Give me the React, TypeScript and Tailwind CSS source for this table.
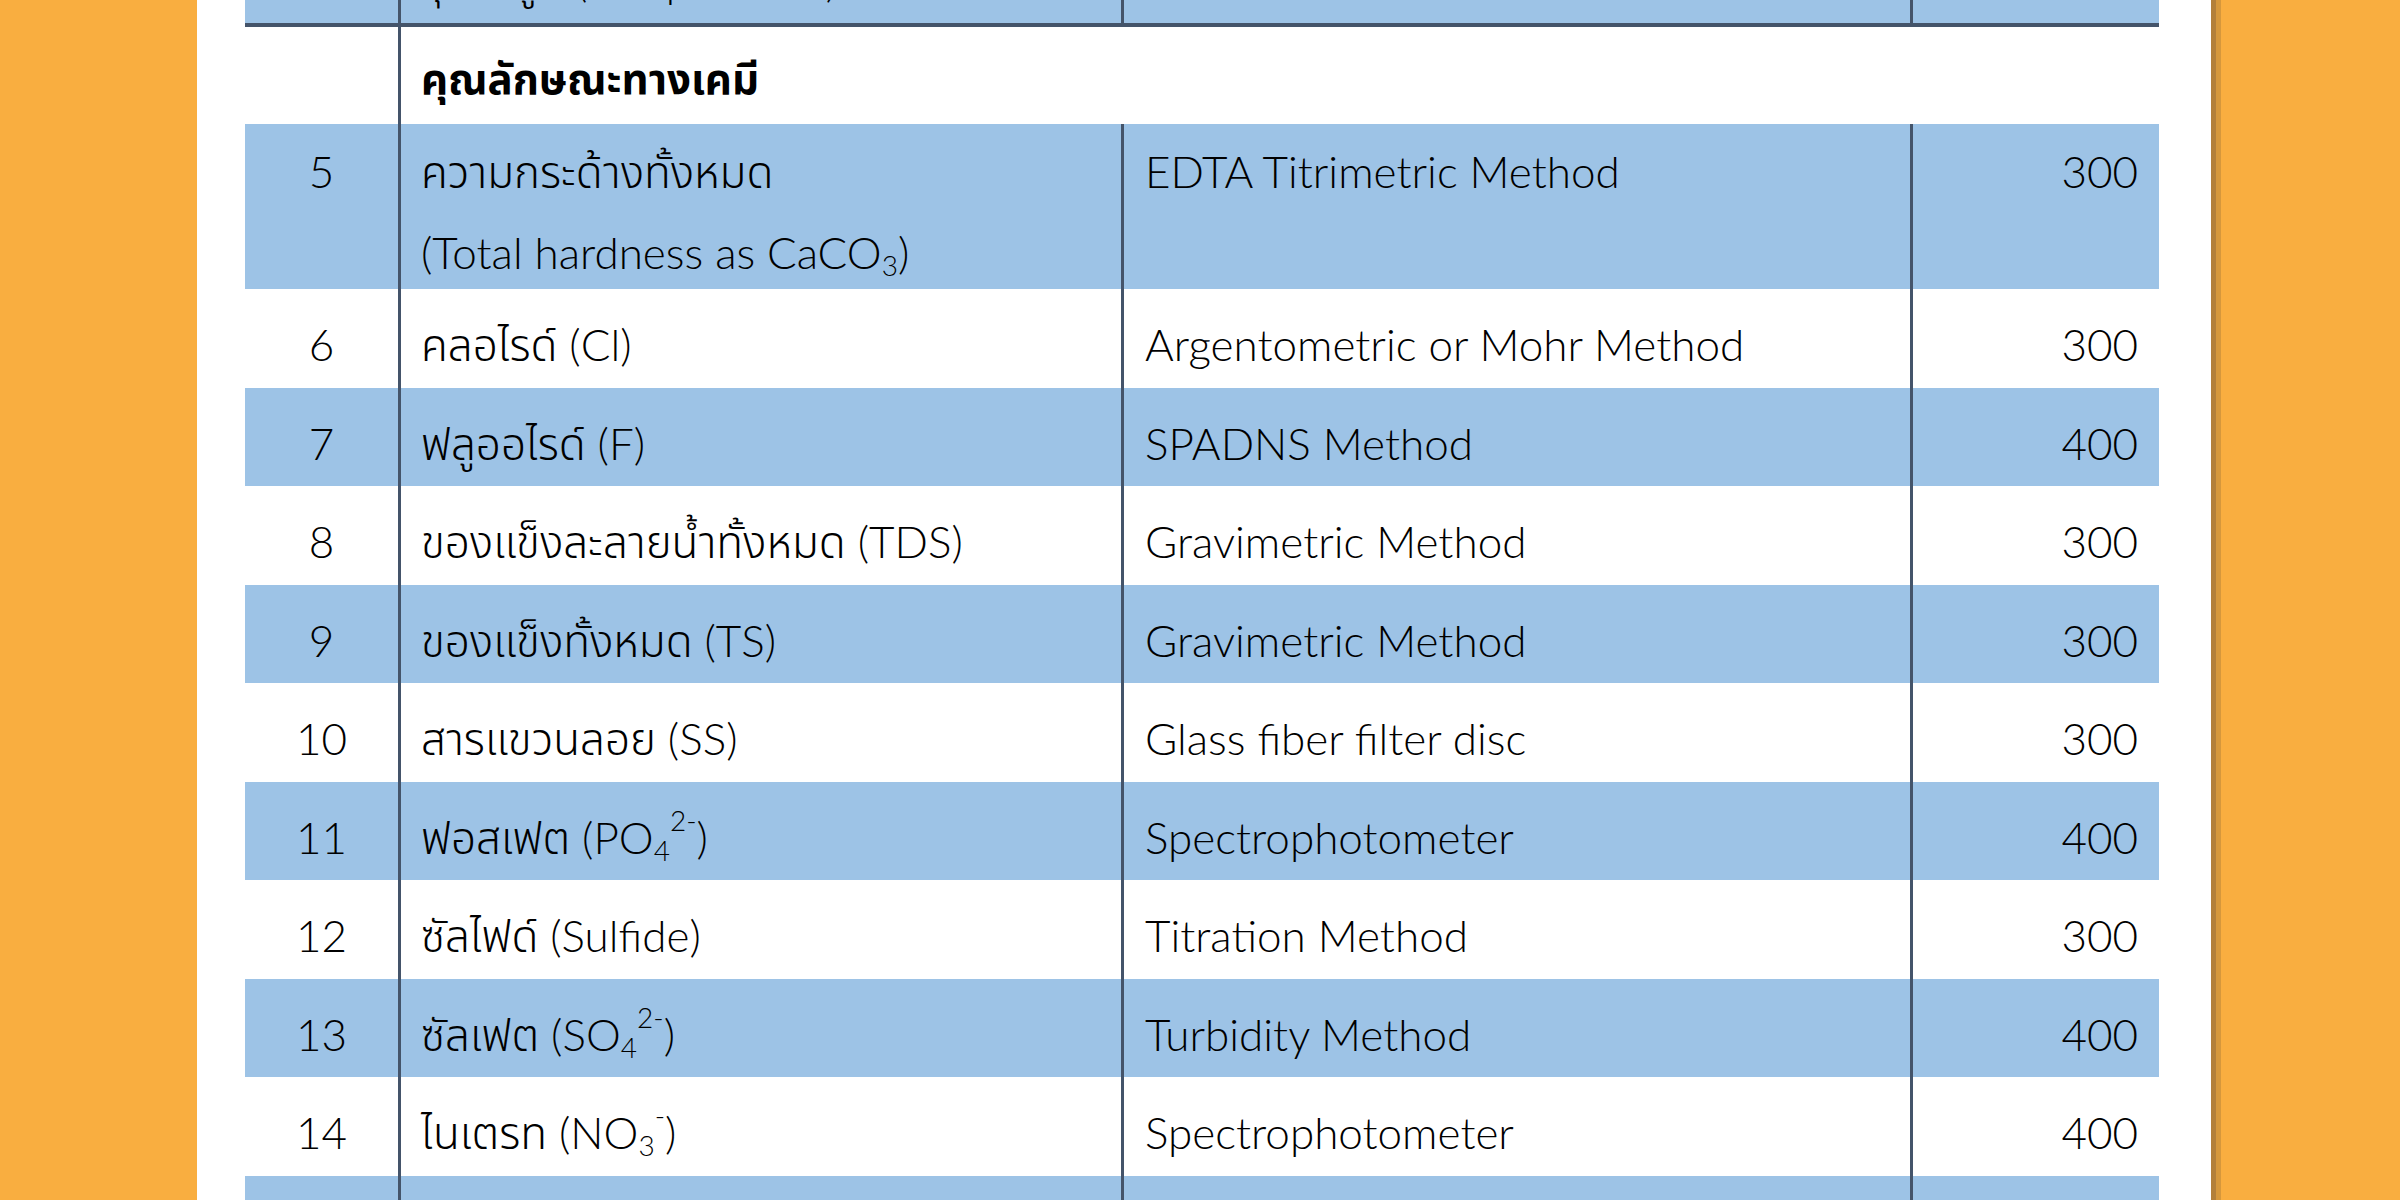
const font = {
  fontFamily: "Lato, 'Noto Sans Thai', 'Noto Sans', sans-serif",
};

type Row = {
  no: string;
  name: React.ReactNode;
  method: string;
  price: string;
};

const Sub = ({ children }: { children: React.ReactNode }) => (
  <span className="relative top-[13px] text-[28px] leading-none">{children}</span>
);
const Sup = ({ children }: { children: React.ReactNode }) => (
  <span className="relative -top-[17px] text-[28px] leading-none">{children}</span>
);

const rows: Row[] = [
  { no: "6", name: "คลอไรด์ (Cl)", method: "Argentometric or Mohr Method", price: "300" },
  { no: "7", name: "ฟลูออไรด์ (F)", method: "SPADNS Method", price: "400" },
  { no: "8", name: "ของแข็งละลายน้ำทั้งหมด (TDS)", method: "Gravimetric Method", price: "300" },
  { no: "9", name: "ของแข็งทั้งหมด (TS)", method: "Gravimetric Method", price: "300" },
  { no: "10", name: "สารแขวนลอย (SS)", method: "Glass fiber filter disc", price: "300" },
  {
    no: "11",
    name: (
      <>
        ฟอสเฟต (PO<Sub>4</Sub>
        <Sup>2-</Sup>)
      </>
    ),
    method: "Spectrophotometer",
    price: "400",
  },
  { no: "12", name: "ซัลไฟด์ (Sulfide)", method: "Titration Method", price: "300" },
  {
    no: "13",
    name: (
      <>
        ซัลเฟต (SO<Sub>4</Sub>
        <Sup>2-</Sup>)
      </>
    ),
    method: "Turbidity Method",
    price: "400",
  },
  {
    no: "14",
    name: (
      <>
        ไนเตรท (NO<Sub>3</Sub>
        <Sup>-</Sup>)
      </>
    ),
    method: "Spectrophotometer",
    price: "400",
  },
  { no: "", name: "", method: "", price: "" },
];

const grid = "grid grid-cols-[153px_723px_789px_249px]";
const line = "border-l-[3px] border-[#44546a]";

function TableRow({ row, index }: { row: Row; index: number }) {
  const bg = index % 2 === 0 ? "bg-white" : "bg-[#9dc3e6]";
  return (
    <div className={`${grid} ${bg} h-[98.5px]`}>
      <div className="flex items-center justify-center pt-[12px]">{row.no}</div>
      <div className={`${line} flex items-center pl-[20px] pt-[12px]`}>{row.name}</div>
      <div className={`${line} flex items-center pl-[21px] pt-[12px]`}>{row.method}</div>
      <div className={`${line} flex items-center justify-end pr-[21px] pt-[12px]`}>{row.price}</div>
    </div>
  );
}

export default function App() {
  return (
    <div className="h-[1200px] w-[2400px] overflow-hidden bg-[#f9ae40] flex">
      <div className="w-[197px] shrink-0" />
      <div
        className="w-[2014px] shrink-0 bg-white pl-[48px] text-[44px] font-light text-black"
        style={font}
      >
        <div className="w-[1914px]">
          {/* previous row, cut at the top */}
          <div className={`${grid} bg-[#9dc3e6] h-[98px] -mt-[75px]`}>
            <div />
            <div className={`${line} flex items-center pl-[20px] pt-[12px]`}>อุณหภูมิ (Temperature)</div>
            <div className={line} />
            <div className={line} />
          </div>
          <div className="h-[4px] bg-[#44546a]" />

          {/* section header */}
          <div className="grid grid-cols-[153px_1761px] h-[97px] bg-white">
            <div />
            <div className={`${line} flex items-center pl-[20px] pt-[6px] font-bold text-[42px]`}>
              คุณลักษณะทางเคมี
            </div>
          </div>

          {/* row 5, two lines */}
          <div className={`${grid} bg-[#9dc3e6] h-[165px]`}>
            <div>
              <div className="flex justify-center h-[86px] items-center pt-[8px]">5</div>
            </div>
            <div className={`${line} pl-[20px]`}>
              <div className="h-[86px] flex items-center pt-[8px]">ความกระด้างทั้งหมด</div>
              <div className="h-[70px] flex items-center pt-[14px]">
                (Total hardness as CaCO<Sub>3</Sub>)
              </div>
            </div>
            <div className={`${line} pl-[21px]`}>
              <div className="h-[86px] flex items-center pt-[8px]">EDTA Titrimetric Method</div>
            </div>
            <div className={`${line} pr-[21px]`}>
              <div className="h-[86px] flex items-center justify-end pt-[8px]">300</div>
            </div>
          </div>

          {rows.map((row, i) => (
            <TableRow key={i} row={row} index={i} />
          ))}
        </div>
      </div>
      <div className="flex-1 flex">
        <div className="w-[5px] bg-[#b3803a]" />
        <div className="w-[5px] bg-[#d6983c]" />
        <div className="flex-1" />
      </div>
    </div>
  );
}
